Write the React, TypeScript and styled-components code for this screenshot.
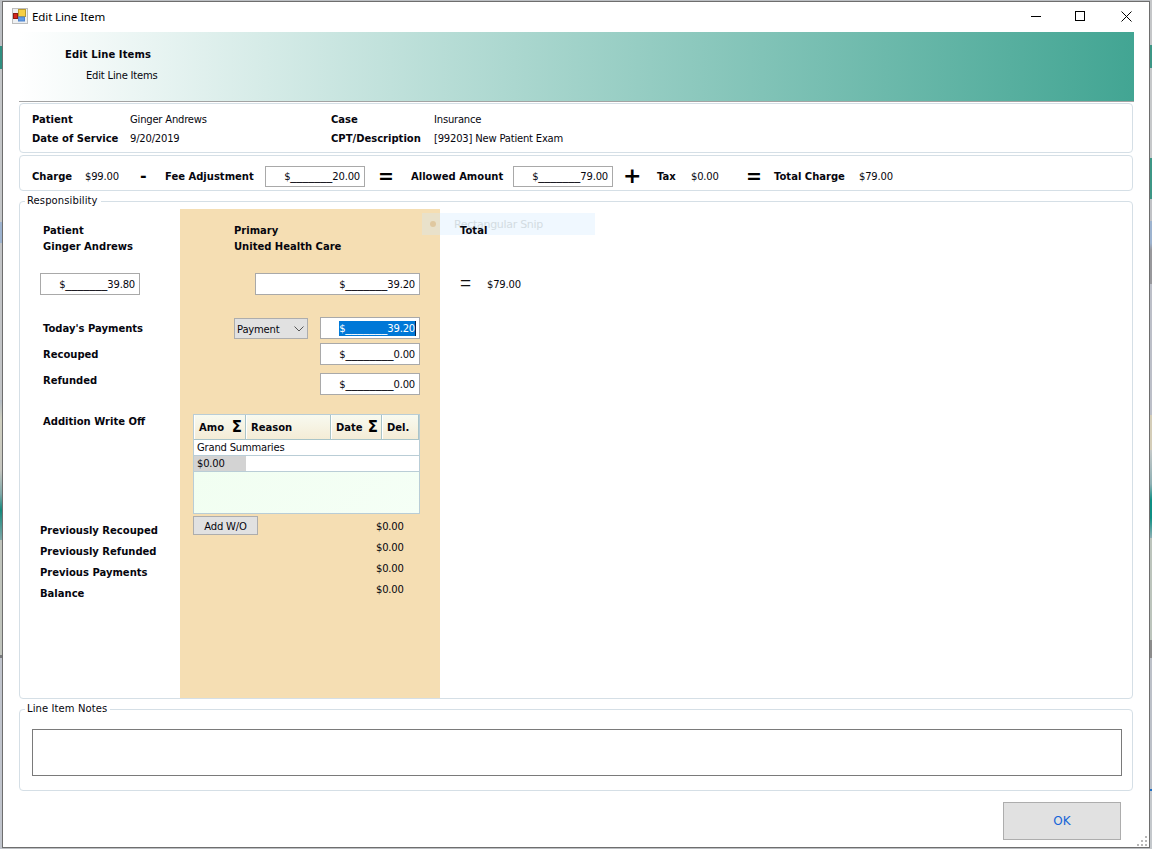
import styled, { createGlobalStyle } from 'styled-components';

const GlobalStyle = createGlobalStyle`
  html, body {
    margin: 0;
    padding: 0;
    height: 100%;
  }
  body {
    font-family: "DejaVu Sans", "Noto Sans", sans-serif;
    font-size: 10px;
    letter-spacing: -0.2px;
    color: #06060e;
    background: #b9bcc0;
  }
`;

const strip = (stops: string) => `linear-gradient(to bottom, ${stops})`;

const Desktop = styled.div`
  width: 1152px;
  height: 849px;
  padding: 1px 2px;
  box-sizing: border-box;
  overflow: hidden;
  background-color: #bcbfc3;
  background-repeat: no-repeat;
  background-size: 2px 100%, 2px 100%;
  background-position: left top, right top;
  background-image:
    ${strip(
      '#bcbfc3 46px, #2f8f80 46px, #2f8f80 69px, #c4c6c8 69px, #c4c6c8 222px, #9db3cf 222px, #9db3cf 243px, #c2c4c6 243px, #c2c4c6 400px, #b4bcc4 400px, #d0d0c0 420px, #c6c6c0 470px, #7fa8a8 494px, #14897c 510px, #7fa8a8 540px, #c0c4bc 540px, #c0c4bc 655px, #77797c 655px, #77797c 658px, #c0c4cc 658px, #c0c4cc 849px',
    )},
    ${strip(
      '#c4c6c8 45px, #3d9686 45px, #3d9686 68px, #c6c8ca 68px, #c6c8ca 158px, #3d9686 158px, #3d9686 199px, #c0c2c6 199px, #c0c2c6 221px, #9db3cf 221px, #9db3cf 243px, #98989c 250px, #98989c 284px, #bcbfc8 284px, #bcbfc8 415px, #d4cdb8 415px, #d4cdb8 450px, #c4c8c8 450px, #8fb0b4 484px, #0f8f84 500px, #0f8f84 518px, #8fb0b4 538px, #bcc4bc 538px, #bcc4bc 640px, #8c8c8c 640px, #8c8c8c 658px, #bcc0c8 658px, #bcc0c8 789px, #1f6fc4 789px, #1f6fc4 791px, #c4c8cc 791px',
    )};
`;

const Window = styled.div`
  height: 847px;
  box-sizing: border-box;
  border: 1px solid #6e6e6e;
  background: #fff;
  position: relative;
  padding: 0 15px 0 16px;
`;

const TitleBar = styled.div`
  height: 30px;
  box-sizing: border-box;
  margin: 0 -15px 0 -16px;
  display: flex;
  align-items: center;
  padding: 0 17px 2px 9px;
`;

const TitleText = styled.div`
  margin-left: 4px;
  font-family: "Noto Sans", sans-serif;
  font-size: 11.5px;
  letter-spacing: -0.1px;
  color: #000;
`;

const TitleButtons = styled.div`
  margin-left: auto;
  display: flex;
  align-items: center;
  gap: 34px;

  svg:last-child {
    margin-left: 2px;
  }
`;

const Banner = styled.div`
  height: 70px;
  box-sizing: border-box;
  border-bottom: 1px solid #a3a3a3;
  background: linear-gradient(to right, #fff 0%, #42a593 100%);
  padding: 14px 0 0 46px;
`;

const BannerTitle = styled.div`
  font-weight: 700;
  height: 16px;
  line-height: 18px;
  letter-spacing: 0.1px;
`;

const BannerSub = styled.div`
  margin: 5px 0 0 21px;
  height: 16px;
  line-height: 18px;
`;

const Panel = styled.div<{ $top: number; $height: number }>`
  margin-top: ${({ $top }) => $top}px;
  margin-right: 1px;
  height: ${({ $height }) => $height}px;
  box-sizing: border-box;
  border: 1px solid #d5dfe6;
  border-radius: 4px;
`;

const InfoGrid = styled.div`
  display: grid;
  grid-template-columns: 98px 201px 103px 1fr;
  grid-auto-rows: 19px;
  align-items: center;
  padding: 5px 0 0 12px;
`;

const ChargeGrid = styled.div`
  height: 100%;
  box-sizing: border-box;
  display: grid;
  grid-template-columns: 53px 55px 25px 100px 115px 31px 102px 112px 32px 34px 57px 26px 85px 1fr;
  align-items: center;
  padding: 6px 0 0 12px;
`;

const Bold = styled.div<{ $top?: number; $left?: number }>`
  font-weight: 700;
  letter-spacing: 0;
  height: 16px;
  line-height: 18px;
  white-space: nowrap;
  margin-top: ${({ $top }) => $top ?? 0}px;
  margin-left: ${({ $left }) => $left ?? 0}px;
`;

const Text = styled.div`
  height: 16px;
  line-height: 18px;
  white-space: nowrap;
`;

const Operator = styled.div<{ $size: number; $shift?: number }>`
  font-weight: 700;
  font-size: ${({ $size }) => $size}px;
  line-height: 20px;
  color: #000;
  margin-left: ${({ $shift }) => $shift ?? 0}px;
`;

const Box = styled.div<{ $width?: number; $top?: number; $left?: number; $height?: number }>`
  width: ${({ $width }) => $width ?? 100}px;
  height: ${({ $height }) => $height ?? 22}px;
  margin-top: ${({ $top }) => $top ?? 0}px;
  margin-left: ${({ $left }) => $left ?? 0}px;
  box-sizing: border-box;
  flex: none;
  display: flex;
  align-items: center;
  justify-content: flex-end;
  padding-right: 4px;
  background: #fff;
  border: 1px solid #a9a9a9;
  white-space: nowrap;
`;

const Rule = styled.span`
  font-size: 12px;
  letter-spacing: 0;
  line-height: 12px;
`;

const Selected = styled.span`
  background: #0078d7;
  color: #fff;
  line-height: 15px;
  border-right: 1px solid #00204a;
  margin-right: -1px;
`;

const Group = styled.section<{ $top: number; $height: number }>`
  position: relative;
  margin-top: ${({ $top }) => $top}px;
  margin-right: 1px;
  height: ${({ $height }) => $height}px;
  box-sizing: border-box;
  border: 1px solid #d5dfe6;
  border-radius: 4px;
`;

const Legend = styled.div`
  position: absolute;
  left: 5px;
  top: -9px;
  padding: 0 3px 0 2px;
  background: #fff;
  line-height: 16px;
  letter-spacing: 0.1px;
`;

const Columns = styled.div`
  height: 100%;
  box-sizing: border-box;
  padding-top: 7px;
  display: grid;
  grid-template-columns: 160px 260px 1fr;
`;

const Column = styled.div`
  padding-top: 13px;
`;

const PeachColumn = styled(Column)`
  background: #f5deb3;
`;

const TotalColumn = styled(Column)`
  position: relative;
  padding-left: 20px;
`;

const SnipGhost = styled.div`
  position: absolute;
  left: -18px;
  top: 4px;
  width: 173px;
  height: 22px;
  display: flex;
  align-items: center;
  background: rgba(204, 232, 255, 0.3);
  color: #d3dce2;
  font-size: 11px;
  letter-spacing: -0.3px;
  padding-left: 32px;
  box-sizing: border-box;
`;

const SnipDot = styled.i`
  position: absolute;
  left: 8px;
  top: 8px;
  width: 6px;
  height: 6px;
  border-radius: 50%;
  background: #e0c8a0;
`;

const TotalLabel = styled(Bold)`
  position: relative;
`;

const TotalRow = styled.div`
  margin-top: 35px;
  height: 22px;
  display: flex;
  align-items: center;
`;

const ThinEquals = styled.div`
  font-family: "Liberation Sans", sans-serif;
  font-size: 19px;
  line-height: 16px;
  width: 27px;
  margin-top: -3px;
  color: #111;
`;

const PaymentRow = styled.div`
  display: flex;
  margin-top: 22px;
  margin-left: 54px;
`;

const Select = styled.div`
  width: 74px;
  height: 21px;
  margin-top: 1px;
  margin-right: 12px;
  box-sizing: border-box;
  flex: none;
  display: flex;
  align-items: center;
  justify-content: space-between;
  padding: 1px 3px 0 2px;
  background: #e1e1e1;
  border: 1px solid #adadad;
`;

const WriteOffGrid = styled.div`
  margin: 19px 0 0 13px;
  width: 227px;
  height: 100px;
  box-sizing: border-box;
  border: 1px solid #b9cdd6;
  background: linear-gradient(135deg, #f0fef0, #f5fff6);
`;

const HeaderRow = styled.div`
  display: grid;
  grid-template-columns: 52px 85px 51px 1fr;
  height: 25px;
  border-bottom: 1px solid #a9c4c8;
  box-sizing: border-box;
`;

const HeaderCell = styled.div`
  display: flex;
  align-items: center;
  justify-content: space-between;
  padding: 0 3px 0 4px;
  font-weight: 700;
  letter-spacing: 0;
  background: linear-gradient(to bottom, #f8faf0, #f4ecd6);
  border-right: 1px solid #a9c4c8;
  border-left: 1px solid #fff;
  box-sizing: border-box;
`;

const Sigma = styled.span`
  font-size: 15px;
  font-weight: 700;
  color: #000;
`;

const SummaryTitle = styled.div`
  height: 16px;
  box-sizing: border-box;
  padding-left: 3px;
  line-height: 15px;
  background: #fff;
  border-bottom: 1px solid #b9cdd6;
`;

const SummaryRow = styled.div`
  height: 16px;
  box-sizing: border-box;
  background: #fff;
  border-bottom: 1px solid #b9cdd6;
  display: grid;
  grid-template-columns: 52px 1fr;
`;

const SummaryCell = styled.div`
  background: #d3d3d3;
  padding-left: 3px;
  line-height: 15px;
`;

const ButtonRow = styled.div`
  display: flex;
  align-items: center;
  margin: 2px 0 0 13px;
`;

const AddButton = styled.div`
  width: 65px;
  height: 19px;
  box-sizing: border-box;
  display: flex;
  align-items: center;
  justify-content: center;
  padding-top: 1px;
  background: #e1e1e1;
  border: 1px solid #adadad;
  margin-right: 118px;
`;

const PeachValue = styled(Text)<{ $top: number }>`
  margin: ${({ $top }) => $top}px 0 0 196px;
`;

const NotesBox = styled.div`
  margin: 19px 10px 0 12px;
  height: 47px;
  box-sizing: border-box;
  border: 1px solid #7a7a7a;
`;

const Footer = styled.div`
  display: flex;
  justify-content: flex-end;
  margin: 11px 13px 0 0;
`;

const OkButton = styled.div`
  width: 118px;
  height: 38px;
  box-sizing: border-box;
  display: flex;
  align-items: center;
  justify-content: center;
  background: #e1e1e1;
  border: 1px solid #adadad;
  color: #1565d8;
  font-size: 12px;
  letter-spacing: 0;
`;

const Grip = styled.svg`
  position: absolute;
  right: 1px;
  bottom: 0;
`;

function AppIcon() {
  return (
    <svg width="16" height="16" viewBox="0 0 16 16">
      <rect x="0.5" y="0.5" width="15" height="15" fill="#eef0f2" stroke="#bdbdbd" />
      <rect x="1.5" y="5.5" width="4" height="5" fill="#d6261c" stroke="#8a1d16" />
      <rect x="6.5" y="1.5" width="7" height="7" fill="#f7cf45" stroke="#b99b2e" />
      <rect x="6.5" y="9" width="6" height="4" fill="#5f9be6" stroke="#4f83cd" />
    </svg>
  );
}

function WindowButtons() {
  return (
    <TitleButtons>
      <svg width="10" height="10" viewBox="0 0 10 10">
        <path d="M0 5.5h10" stroke="#000" strokeWidth="1" />
      </svg>
      <svg width="10" height="10" viewBox="0 0 10 10">
        <rect x="0.5" y="0.5" width="9" height="9" fill="none" stroke="#000" />
      </svg>
      <svg width="11" height="11" viewBox="0 0 11 11">
        <path d="M0.5 0.5l10 10M10.5 0.5l-10 10" stroke="#000" strokeWidth="1" />
      </svg>
    </TitleButtons>
  );
}

function MoneyText({ rule, amount }: { rule: string; amount: string }) {
  return (
    <>
      $<Rule>{rule}</Rule>
      {amount}
    </>
  );
}

export default function App() {
  return (
    <>
      <GlobalStyle />
      <Desktop>
        <Window>
          <TitleBar>
            <AppIcon />
            <TitleText>Edit Line Item</TitleText>
            <WindowButtons />
          </TitleBar>
          <Banner>
            <BannerTitle>Edit Line Items</BannerTitle>
            <BannerSub>Edit Line Items</BannerSub>
          </Banner>

          <Panel $top={1} $height={50}>
            <InfoGrid>
              <Bold>Patient</Bold>
              <Text>Ginger Andrews</Text>
              <Bold>Case</Bold>
              <Text>Insurance</Text>
              <Bold>Date of Service</Bold>
              <Text>9/20/2019</Text>
              <Bold>CPT/Description</Bold>
              <Text>[99203] New Patient Exam</Text>
            </InfoGrid>
          </Panel>

          <Panel $top={2} $height={36}>
            <ChargeGrid>
              <Bold>Charge</Bold>
              <Text>$99.00</Text>
              <Operator $size={16}>-</Operator>
              <Bold>Fee Adjustment</Bold>
              <Box $height={21}>
                <MoneyText rule="_______" amount="20.00" />
              </Box>
              <Operator $size={19} $shift={-2}>=</Operator>
              <Bold>Allowed Amount</Bold>
              <Box $height={21}>
                <MoneyText rule="_______" amount="79.00" />
              </Box>
              <Operator $size={22} $shift={-2}>+</Operator>
              <Bold>Tax</Bold>
              <Text>$0.00</Text>
              <Operator $size={19} $shift={-2}>=</Operator>
              <Bold>Total Charge</Bold>
              <Text>$79.00</Text>
            </ChargeGrid>
          </Panel>

          <Group $top={10} $height={498}>
            <Legend>Responsibility</Legend>
            <Columns>
              <Column>
                <Bold $left={23}>Patient</Bold>
                <Bold $left={23}>Ginger Andrews</Bold>
                <Box $top={19} $left={20}>
                  <MoneyText rule="_______" amount="39.80" />
                </Box>
                <Bold $top={25} $left={23}>Today's Payments</Bold>
                <Bold $top={10} $left={23}>Recouped</Bold>
                <Bold $top={10} $left={23}>Refunded</Bold>
                <Bold $top={25} $left={23}>Addition Write Off</Bold>
                <Bold $top={93} $left={20}>Previously Recouped</Bold>
                <Bold $top={5} $left={20}>Previously Refunded</Bold>
                <Bold $top={5} $left={20}>Previous Payments</Bold>
                <Bold $top={5} $left={20}>Balance</Bold>
              </Column>

              <PeachColumn>
                <Bold $left={54}>Primary</Bold>
                <Bold $left={54}>United Health Care</Bold>
                <Box $width={165} $top={19} $left={75}>
                  <MoneyText rule="_______" amount="39.20" />
                </Box>
                <PaymentRow>
                  <Select>
                    Payment
                    <svg width="10" height="6" viewBox="0 0 10 6">
                      <path d="M0.5 0.5L5 5l4.5-4.5" fill="none" stroke="#555" />
                    </svg>
                  </Select>
                  <Box>
                    <Selected>
                      <MoneyText rule="_______" amount="39.20" />
                    </Selected>
                  </Box>
                </PaymentRow>
                <Box $top={4} $left={140}>
                  <MoneyText rule="________" amount="0.00" />
                </Box>
                <Box $top={8} $left={140}>
                  <MoneyText rule="________" amount="0.00" />
                </Box>
                <WriteOffGrid>
                  <HeaderRow>
                    <HeaderCell>
                      Amo <Sigma>Σ</Sigma>
                    </HeaderCell>
                    <HeaderCell>Reason</HeaderCell>
                    <HeaderCell>
                      Date <Sigma>Σ</Sigma>
                    </HeaderCell>
                    <HeaderCell>Del.</HeaderCell>
                  </HeaderRow>
                  <SummaryTitle>Grand Summaries</SummaryTitle>
                  <SummaryRow>
                    <SummaryCell>$0.00</SummaryCell>
                  </SummaryRow>
                </WriteOffGrid>
                <ButtonRow>
                  <AddButton>Add W/O</AddButton>
                  <Text>$0.00</Text>
                </ButtonRow>
                <PeachValue $top={4}>$0.00</PeachValue>
                <PeachValue $top={5}>$0.00</PeachValue>
                <PeachValue $top={5}>$0.00</PeachValue>
              </PeachColumn>

              <TotalColumn>
                <SnipGhost>
                  <SnipDot />
                  Rectangular Snip
                </SnipGhost>
                <TotalLabel>Total</TotalLabel>
                <TotalRow>
                  <ThinEquals>=</ThinEquals>
                  <Text>$79.00</Text>
                </TotalRow>
              </TotalColumn>
            </Columns>
          </Group>

          <Group $top={10} $height={82}>
            <Legend>Line Item Notes</Legend>
            <NotesBox />
          </Group>

          <Footer>
            <OkButton>OK</OkButton>
          </Footer>

          <Grip width="11" height="11" viewBox="0 0 11 11">
            <path d="M8 0h2v2H8zM4 4h2v2H4zM8 4h2v2H8zM0 8h2v2H0zM4 8h2v2H4zM8 8h2v2H8z" fill="#b8b8b8" />
          </Grip>
        </Window>
      </Desktop>
    </>
  );
}
